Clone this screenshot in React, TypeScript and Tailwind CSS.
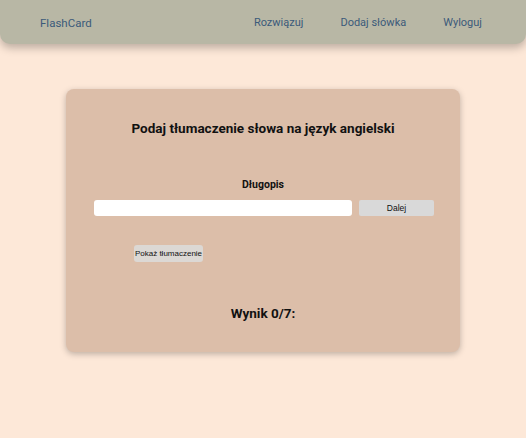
import React from "react";

export default function App() {
  return (
    <div className="min-h-[438px] w-full bg-[#fde8d8] font-['Roboto',sans-serif]">
      <nav className="flex h-[44px] items-center justify-between rounded-b-[10px] bg-[#b8b7a5] pl-[40px] pr-[44px] pt-[3px] shadow-[0_4px_8px_rgba(0,0,0,0.25)]">
        <span className="text-[11.5px] text-[#3b5a7a]">FlashCard</span>
        <div className="flex items-center gap-[37px] text-[11px] text-[#3b5a7a]">
          <span>Rozwiązuj</span>
          <span>Dodaj słówka</span>
          <span>Wyloguj</span>
        </div>
      </nav>
      <div className="flex justify-center pt-[45px]">
        <div className="flex h-[263px] w-[394px] flex-col items-center rounded-[8px] bg-[#dcbea9] shadow-[0_2px_6px_rgba(0,0,0,0.25)]">
          <h1 className="mt-[29px] text-[13.5px] leading-[20px] font-bold text-[#111]">Podaj tłumaczenie słowa na język angielski</h1>
          <div className="mt-[40px] text-[10.5px] leading-[14px] font-bold text-[#111]">Długopis</div>
          <div className="mt-[8px] flex w-full items-center gap-[7px] pl-[28px]">
            <input className="h-[16px] w-[258px] rounded-[3px] bg-white outline-none" />
            <button className="h-[16px] w-[75px] rounded-[2px] bg-[#d9d9d9] font-['Liberation_Sans',sans-serif] text-[8.5px] text-[#111]">Dalej</button>
          </div>
          <div className="mt-[29px] flex w-full pl-[68px]">
            <button className="h-[17px] w-[69px] rounded-[3px] bg-[#dcd8d4] font-['Liberation_Sans',sans-serif] text-[8px] text-[#111] whitespace-nowrap">Pokaż tłumaczenie</button>
          </div>
          <div className="mt-[41px] text-[13.5px] leading-[20px] font-bold text-[#111]">Wynik 0/7:</div>
        </div>
      </div>
    </div>
  );
}
